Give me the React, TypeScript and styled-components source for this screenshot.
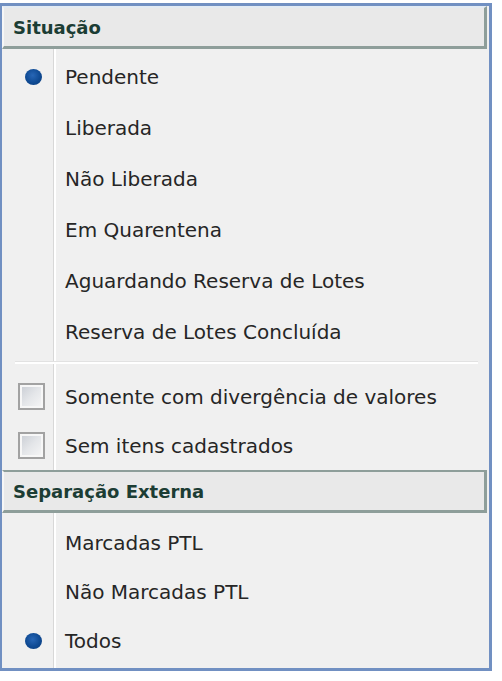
import React from 'react'
import styled, { createGlobalStyle } from 'styled-components'

const GlobalStyle = createGlobalStyle`
  body {
    margin: 0;
    background: #ffffff;
  }
`

const situacaoOptions = [
  { label: 'Pendente', selected: true },
  { label: 'Liberada', selected: false },
  { label: 'Não Liberada', selected: false },
  { label: 'Em Quarentena', selected: false },
  { label: 'Aguardando Reserva de Lotes', selected: false },
  { label: 'Reserva de Lotes Concluída', selected: false },
]

const filterChecks = ['Somente com divergência de valores', 'Sem itens cadastrados']

const separacaoOptions = [
  { label: 'Marcadas PTL', selected: false },
  { label: 'Não Marcadas PTL', selected: false },
  { label: 'Todos', selected: true },
]

const App = () => (
  <>
    <GlobalStyle />
    <Panel>
      <SectionHeader $first>Situação</SectionHeader>
      <OptionList $top={2} $bottom={0}>
        {situacaoOptions.map((option) => (
          <OptionRow key={option.label} $height={51}>
            <Gutter>{option.selected && <RadioDot />}</Gutter>
            <Label>{option.label}</Label>
          </OptionRow>
        ))}
        <Separator />
        {filterChecks.map((label) => (
          <OptionRow key={label} $height={49}>
            <Gutter>
              <CheckBox />
            </Gutter>
            <Label>{label}</Label>
          </OptionRow>
        ))}
      </OptionList>
      <SectionHeader>Separação Externa</SectionHeader>
      <OptionList $top={5} $bottom={3}>
        {separacaoOptions.map((option) => (
          <OptionRow key={option.label} $height={49}>
            <Gutter>{option.selected && <RadioDot />}</Gutter>
            <Label>{option.label}</Label>
          </OptionRow>
        ))}
      </OptionList>
    </Panel>
  </>
)

export default App

const Panel = styled.div`
  box-sizing: border-box;
  width: 492px;
  margin-top: 3px;
  border: 3px solid #7190c2;
  border-left-width: 2px;
  background: #f0f0f0;
  display: flex;
  flex-direction: column;
  font-family: 'DejaVu Sans', Verdana, sans-serif;
`

const SectionHeader = styled.div<{ $first?: boolean }>`
  box-sizing: border-box;
  height: 43px;
  margin-right: 2px;
  padding-left: 9px;
  display: flex;
  align-items: center;
  background: #e9e9e9;
  border-top: 2px solid ${({ $first }) => ($first ? '#e3ebf3' : '#8e9e9a')};
  border-left: 2px solid #f6f6f6;
  border-right: 3px solid #8e9e9a;
  border-bottom: 3px solid #8e9e9a;
  color: #1c3d34;
  font-size: 18px;
  font-weight: 700;
`

const OptionList = styled.div<{ $top: number; $bottom: number }>`
  display: flex;
  flex-direction: column;
  padding-top: ${({ $top }) => $top}px;
  padding-bottom: ${({ $bottom }) => $bottom}px;
  background: linear-gradient(
    to right,
    transparent 51px,
    #d8d8d8 51px,
    #d8d8d8 52px,
    #ffffff 52px,
    #ffffff 54px,
    transparent 54px
  );
`

const OptionRow = styled.div<{ $height: number }>`
  display: flex;
  align-items: center;
  height: ${({ $height }) => $height}px;
`

const Gutter = styled.div`
  width: 60px;
  flex-shrink: 0;
  display: flex;
  justify-content: center;
  align-items: center;
`

const Label = styled.span`
  margin-left: 3px;
  color: #262626;
  font-size: 20px;
  white-space: nowrap;
`

const RadioDot = styled.span`
  width: 17px;
  height: 16px;
  margin-left: 2px;
  border-radius: 50%;
  background: radial-gradient(circle at 45% 40%, #2766b6 0%, #0f4a93 55%, #0a3a78 100%);
`

const CheckBox = styled.span`
  box-sizing: border-box;
  width: 27px;
  height: 27px;
  margin-left: -2px;
  border: 2px solid #a2a2a2;
  box-shadow: inset 0 0 0 2px #f7f7f7;
  background: linear-gradient(135deg, #c8ccd3 0%, #e4e6e9 50%, #f7f7f7 100%);
`

const Separator = styled.div`
  height: 2px;
  margin: 4px 11px 8px 13px;
  background: #ffffff;
  border-top: 1px solid #e2e2e2;
`
